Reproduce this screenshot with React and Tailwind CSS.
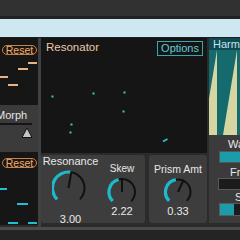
import React from "react";

function pt(cx, cy, r, a) {
  const rad = (a * Math.PI) / 180;
  return [cx + r * Math.sin(rad), cy - r * Math.cos(rad)];
}
function arc(cx, cy, r, a0, a1) {
  const [x0, y0] = pt(cx, cy, r, a0);
  const [x1, y1] = pt(cx, cy, r, a1);
  const large = a1 - a0 > 180 ? 1 : 0;
  return `M${x0} ${y0} A${r} ${r} 0 ${large} 1 ${x1} ${y1}`;
}
function Knob({ w, h, cx, cy, r, val, ind }) {
  const [ix, iy] = pt(cx, cy, r + 1, ind);
  return (
    <svg width={w} height={h} style={{ width: w, height: h }} className="block shrink-0">
      <path d={arc(cx, cy, r, -135, 135)} stroke="#111" strokeWidth="2" fill="none" />
      <path d={arc(cx, cy, r, -135, val)} stroke="#1fb9cb" strokeWidth="3.2" fill="none" />
      <line x1={cx} y1={cy} x2={ix} y2={iy} stroke="#111" strokeWidth="2" />
    </svg>
  );
}

function Pill() {
  return (
    <div className="mx-[2px] h-[10px] w-[35px] rounded-full border border-[#c3844a] bg-[#1d1610] flex items-center justify-center text-[10.5px] leading-none text-[#eeae72]">
      Reset
    </div>
  );
}

export default function App() {
  return (
    <div className="w-[240px] h-[240px] overflow-hidden bg-[#2b2b2b] flex flex-col font-['Liberation_Sans',Arial,sans-serif]">
      <div className="h-[16px] shrink-0 bg-[#313131]" />
      <div className="h-[3px] shrink-0 bg-[#222]" />
      <div className="h-[18px] shrink-0 bg-[#cde8f0]" />
      <div className="h-[1px] shrink-0 bg-[#1e1e1e]" />
      <div className="h-[189px] shrink-0 flex">
        {/* left column */}
        <div className="w-[38px] shrink-0 flex flex-col">
          <div className="h-[67px] bg-[#161616] flex flex-col pt-[7px]">
            <Pill />
            <svg width="38" height="45" className="block h-[45px]">
              <rect x="28" y="7" width="9" height="2" fill="#eab385" />
              <rect x="18" y="13" width="10" height="2" fill="#eab385" />
              <rect x="0" y="21" width="8" height="2" fill="#eab385" />
              <rect x="8" y="29" width="10" height="2" fill="#eab385" />
            </svg>
          </div>
          <div className="h-[47px] bg-[#3b3b3b] flex flex-col pt-[4px] overflow-hidden">
            <div className="ml-[-4px] text-[11px] leading-[13px] text-[#e6e6e6] whitespace-nowrap">Morph</div>
            <div className="mt-[1px] h-[2px] w-[32px] bg-[#151515]" />
            <svg width="38" height="12" className="block h-[12px] mt-[2px]">
              <polygon points="22,10.5 27,1 32,10.5" fill="#c4c4c4" stroke="#111" strokeWidth="1" />
            </svg>
          </div>
          <div className="h-[73px] bg-[#161616] flex flex-col pt-[6px]">
            <Pill />
            <svg width="38" height="57" className="block h-[57px]">
              <rect x="0" y="20" width="7" height="2" fill="#22bfd0" />
              <rect x="17" y="35" width="11" height="2" fill="#22bfd0" />
              <rect x="8" y="54" width="10" height="2" fill="#22bfd0" />
              <rect x="28" y="54" width="9" height="2" fill="#22bfd0" />
            </svg>
          </div>
        </div>
        <div className="w-[3px] shrink-0 bg-[#414141]" />
        {/* center column */}
        <div className="w-[166px] shrink-0 flex flex-col">
          <div className="relative h-[115px] bg-[#151515] flex justify-between items-start pt-[3px] pl-[5px] pr-[4px]">
            <div className="text-[11.5px] leading-[13px] text-[#ecc9a6]">Resonator</div>
            <div className="h-[15px] px-[3px] border border-[#35a9b3] flex items-center text-[11px] leading-none text-[#62ccd5]">Options</div>
            <svg width="166" height="115" className="absolute inset-0 h-[115px]">
              <g fill="#2fd0c8">
                <rect x="10.5" y="57.5" width="2" height="2" />
                <rect x="51.5" y="54.5" width="2" height="2" />
                <rect x="82.5" y="53.5" width="2" height="2" />
                <rect x="81.5" y="72.5" width="2" height="2" />
                <rect x="29.5" y="85.5" width="2" height="2" />
                <rect x="28.5" y="93.5" width="2" height="2" />
              </g>
              <line x1="122" y1="103.5" x2="126.5" y2="101" stroke="#2bb8d0" strokeWidth="2" />
            </svg>
          </div>
          <div className="h-[2px]" />
          <div className="h-[68px] flex gap-[4px]">
            <div className="w-[104px] rounded-[3px] bg-[#3d3d3d] flex">
              <div className="w-[59px] flex flex-col items-center">
                <div className="text-[11px] leading-[12px] text-[#e8e8e8]">Resonance</div>
                <div className="mt-[3px]">
                  <Knob w={38} h={38} cx={16.5} cy={18} r={16} val={10} ind={10} />
                </div>
                <div className="mt-[5px] text-[11px] leading-[12px] text-[#e8e8e8]">3.00</div>
              </div>
              <div className="w-[44px] flex flex-col items-center pt-[8px]">
                <div className="text-[10px] leading-[12px] text-[#e8e8e8]">Skew</div>
                <div className="mt-[2px]">
                  <Knob w={30} h={30} cx={15} cy={15} r={13} val={-15} ind={0} />
                </div>
                <div className="mt-[-2px] text-[11px] leading-[12px] text-[#e8e8e8]">2.22</div>
              </div>
            </div>
            <div className="w-[58px] rounded-[3px] bg-[#3d3d3d] flex flex-col items-center pt-[8px]">
              <div className="text-[10.5px] leading-[12px] text-[#e8e8e8] whitespace-nowrap">Prism Amt</div>
              <div className="mt-[2px]">
                <Knob w={30} h={30} cx={15} cy={15} r={12.5} val={-10} ind={25} />
              </div>
              <div className="mt-[-2px] text-[11px] leading-[12px] text-[#e8e8e8]">0.33</div>
            </div>
          </div>
        </div>
        <div className="w-[2px] shrink-0" />
        {/* right column */}
        <div className="flex-1 flex flex-col overflow-hidden">
          <div className="h-[97px] flex flex-col">
            <div className="h-[12px] bg-[#0f4a52] pl-[4px] text-[11px] leading-[12px] text-[#c2e6ef] whitespace-nowrap">Harmonics</div>
            <svg width="31" height="85" className="block h-[85px]">
              <rect width="31" height="85" fill="#156a6e" />
              <polygon points="-6,85 8,0 8,85" fill="#d6d6a2" />
              <polygon points="14,85 28,0 28,85" fill="#d6d6a2" />
              <polygon points="34,85 48,0 48,85" fill="#d6d6a2" />
            </svg>
          </div>
          <div className="h-[88px] bg-[#3b3b3b] flex flex-col pt-[3px]">
            <div className="pl-[19px] h-[12px] text-[11px] leading-[12px] text-[#e8e8e8] whitespace-nowrap">Wave</div>
            <div className="ml-[10px] mt-[1px] h-[12px] w-[30px] border border-[#555] bg-[#1c9bab] shrink-0" />
            <div className="pl-[21px] mt-[3px] h-[12px] text-[11px] leading-[12px] text-[#e8e8e8] whitespace-nowrap">Freq</div>
            <div className="ml-[9px] h-[12px] w-[30px] border border-[#5a5a5a] bg-[#1b1b1b] shrink-0" />
            <div className="pl-[26px] mt-[1px] h-[12px] text-[11px] leading-[12px] text-[#e8e8e8] whitespace-nowrap">Shape</div>
            <div className="ml-[10px] h-[13px] w-[30px] border border-[#5a5a5a] bg-[#1b1b1b] flex shrink-0">
              <div className="w-[14px] h-full bg-[#1c9bab]" />
            </div>
          </div>
        </div>
      </div>
      <div className="h-[3px] shrink-0 bg-[#4b4b4b]" />
      <div className="flex-1 bg-[#242424]" />
    </div>
  );
}
